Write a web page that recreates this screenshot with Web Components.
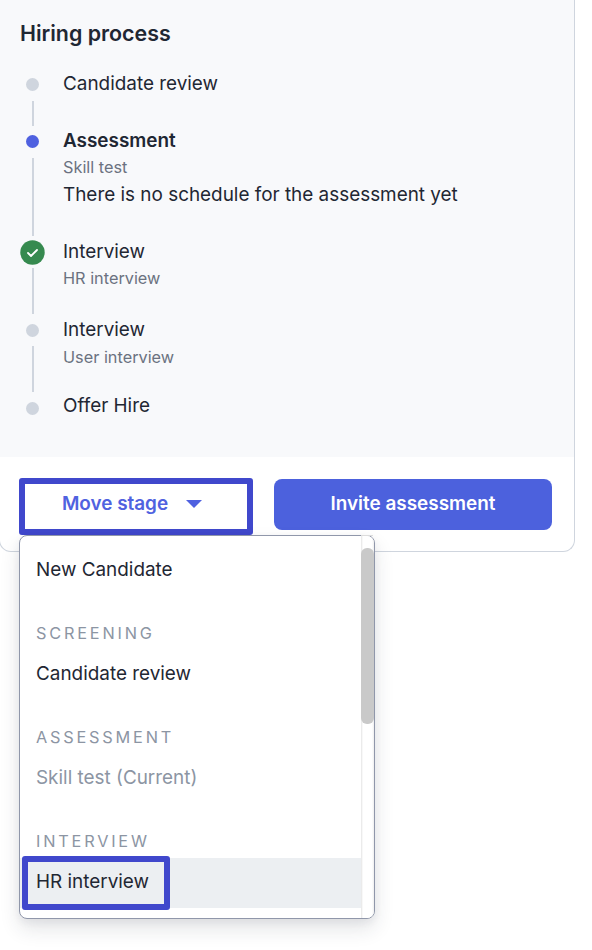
<!DOCTYPE html>
<html lang="en">
<head>
<meta charset="utf-8">
<title>Hiring process</title>
<style>
html,body{margin:0;padding:0;background:#fff;height:950px;overflow:hidden}
body{font-family:Inter,"Liberation Sans",sans-serif;color:#1f2733}
</style>
</head>
<body>
<hiring-card>
  <span slot="title">Hiring process</span>
  <hiring-step state="todo" h="57" tone="-0.5"><span>Candidate review</span></hiring-step>
  <hiring-step state="active" h="110.5" tone="-1"><span>Assessment</span><span slot="sub">Skill test</span><span slot="note">There is no schedule for the assessment yet</span></hiring-step>
  <hiring-step state="done" h="78" tone="0"><span>Interview</span><span slot="sub">HR interview</span></hiring-step>
  <hiring-step state="todo" h="78" tone="0"><span>Interview</span><span slot="sub" style="position:relative;top:1px">User interview</span></hiring-step>
  <hiring-step state="todo" h="37" tone="-2" last><span>Offer Hire</span></hiring-step>
  <stage-button slot="footer">
    <span>Move stage</span>
    <stage-menu slot="menu">
      <stage-item>New Candidate</stage-item>
      <stage-group>SCREENING</stage-group>
      <stage-item>Candidate review</stage-item>
      <stage-group>ASSESSMENT</stage-group>
      <stage-item disabled>Skill test (Current)</stage-item>
      <stage-group>INTERVIEW</stage-group>
      <stage-item focused>HR interview</stage-item>
    </stage-menu>
  </stage-button>
  <invite-button slot="footer">Invite assessment</invite-button>
</hiring-card>
<script>
function shadow(el, html){ el.attachShadow({mode:'open'}).innerHTML = html; }

customElements.define('hiring-card', class extends HTMLElement{
  constructor(){super();shadow(this,`<style>
    :host{display:block;box-sizing:border-box;width:576px;height:552px;margin-left:-1px;background:#fff;
      border:1px solid #cfd5de;border-top:0;border-radius:0 0 12px 12px}
    .panel{box-sizing:border-box;height:457px;background:#f8f9fb;padding:20px 0 0 20px}
    h2{margin:0 0 25.5px;font:600 21.4px/27px Inter,"Liberation Sans",sans-serif;color:#1f2733}
    .steps{display:flex;flex-direction:column}
    .foot{display:flex;align-items:flex-start;gap:21px;padding:21px 0 0 19px}
  </style>
  <div class="panel"><h2><slot name="title"></slot></h2><div class="steps"><slot></slot></div></div>
  <div class="foot"><slot name="footer"></slot></div>`)}
});

customElements.define('hiring-step', class extends HTMLElement{
  constructor(){super();shadow(this,`<style>
    :host{display:grid;grid-template-columns:25px 1fr;column-gap:18px;box-sizing:border-box}
    .rail{display:flex;flex-direction:column;align-items:center}
    .mark{flex:none;height:24px;display:flex;align-items:center;justify-content:center}
    .dot{width:13px;height:13px;border-radius:50%;background:#cfd5de}
    :host([state=active]) .dot{background:#4f61e0}
    .line{flex:1;width:2px;background:#cfd5de;margin:4px 0 4px}
    :host([last]) .line{display:none}
    svg{display:block;width:25px;height:25px}
    .title{font:400 18.9px/24px Inter,"Liberation Sans",sans-serif;color:#1f2733}
    :host([state=active]) .title{font-weight:600}
    .sub{font:400 16.3px/24px Inter,"Liberation Sans",sans-serif;color:#6b7280;margin-top:2px}
    .note{font:400 18.9px/24px Inter,"Liberation Sans",sans-serif;color:#1f2733;margin-top:4px}
    .empty{display:none}
  </style>
  <div class="rail"><div class="mark"></div><div class="line"></div></div>
  <div class="text"><div class="title"><slot></slot></div><div class="sub"><slot name="sub"></slot></div><div class="note"><slot name="note"></slot></div></div>`)}
  connectedCallback(){
    const r=this.shadowRoot;
    this.style.height=this.getAttribute('h')+'px';
    r.querySelector('.text').style.marginTop=(this.getAttribute('tone')||0)+'px';
    r.querySelector('.mark').innerHTML=this.getAttribute('state')==='done'
      ?'<svg viewBox="0 0 25 25"><circle cx="12.5" cy="12.5" r="12.2" fill="#368a4f"/><path d="M8 13l3 3 6-6" fill="none" stroke="#fff" stroke-width="1.8" stroke-linecap="round" stroke-linejoin="round"/></svg>'
      :'<div class="dot"></div>';
    if(!this.querySelector('[slot=sub]')) r.querySelector('.sub').classList.add('empty');
    if(!this.querySelector('[slot=note]')) r.querySelector('.note').classList.add('empty');
  }
});

customElements.define('stage-button', class extends HTMLElement{
  constructor(){super();shadow(this,`<style>
    :host{display:block;position:relative;flex:none;width:234px;height:57px}
    .btn{box-sizing:border-box;height:57px;border:6px solid #4048cc;border-radius:3px;background:#fff;
      display:flex;align-items:center;justify-content:center;gap:18px;padding:0 8px 5px 0;
      font:600 18.9px/24px Inter,"Liberation Sans",sans-serif;color:#5062e0}
    svg{display:block;width:16px;height:8px;flex:none}
    .pop{position:absolute;left:0;top:57px;z-index:2}
  </style>
  <div class="btn"><slot></slot><svg viewBox="0 0 16 8"><path d="M0 0h16L8 8z" fill="#4f61e0"/></svg></div>
  <div class="pop"><slot name="menu"></slot></div>`)}
});

customElements.define('invite-button', class extends HTMLElement{
  constructor(){super();shadow(this,`<style>
    :host{display:flex;flex:none;box-sizing:border-box;width:278px;height:51px;margin-top:1px;padding-bottom:2px;
      align-items:center;justify-content:center;border-radius:8px;background:#4c61dd;color:#fff;
      font:600 18.9px/24px Inter,"Liberation Sans",sans-serif}
  </style><slot></slot>`)}
});

customElements.define('stage-menu', class extends HTMLElement{
  constructor(){super();shadow(this,`<style>
    :host{display:flex;box-sizing:border-box;width:356px;height:384px;background:#fff;border:1px solid #9097aa;border-radius:8px;
      box-shadow:0 10px 20px rgba(30,40,60,.12),0 3px 8px rgba(30,40,60,.06)}
    .list{flex:1;min-width:0;padding-top:10px;overflow:hidden;border-radius:7px 0 0 7px}
    .track{flex:none;position:relative;width:13px;padding-top:12px;border-radius:0 7px 7px 0;
      background:linear-gradient(to right,#e4e4e4,#fff 2px,#fff 11px,#eee)}
    .track::before{content:"";position:absolute;left:0;right:1px;top:-1px;height:1px;background:#dcdcdc}
    .thumb{height:176px;width:100%;border-radius:6px;background:#c9c9c9}
  </style><div class="list"><slot></slot></div><div class="track"><div class="thumb"></div></div>`)}
});

customElements.define('stage-item', class extends HTMLElement{
  constructor(){super();shadow(this,`<style>
    :host{display:flex;align-items:center;height:50px;padding-left:16px;
      font:400 18.9px/24px Inter,"Liberation Sans",sans-serif;color:#1f2733}
    :host([disabled]){color:#8c95a3}
    :host([focused]){background:#eceff2;padding-left:2px}
    .in{display:block;padding-bottom:2px}
    :host([focused]) .in{box-sizing:border-box;height:54px;width:148px;border:6px solid #4048cc;border-radius:3px;padding:0 0 0 8px;line-height:40px}
  </style><div class="in"><slot></slot></div>`)}
});

customElements.define('stage-group', class extends HTMLElement{
  constructor(){super();shadow(this,`<style>
    :host{display:block;height:24px;margin:25px 0 5px;padding-left:16px;
      font:400 16.3px/24px Inter,"Liberation Sans",sans-serif;letter-spacing:2.8px;color:#8c95a3}
  </style><slot></slot>`)}
});
</script>
</body>
</html>
